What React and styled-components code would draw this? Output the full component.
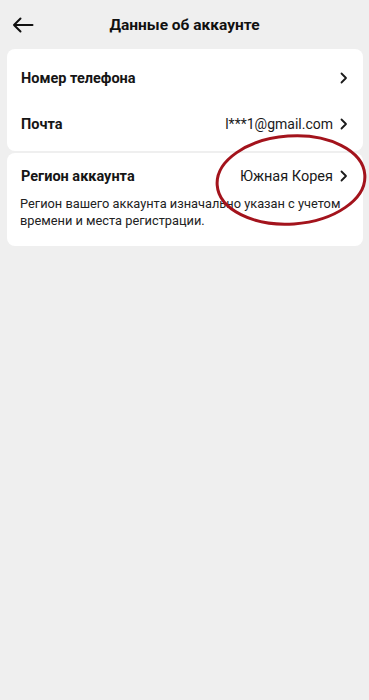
import React from 'react'
import styled, { createGlobalStyle } from 'styled-components'

const GlobalStyle = createGlobalStyle`
  html, body {
    margin: 0;
    padding: 0;
    background: #efefef;
  }
  body {
    font-family: Roboto, "Noto Sans", "Liberation Sans", sans-serif;
    color: #161616;
  }
`

const Page = styled.div`
  position: relative;
  width: 369px;
  min-height: 700px;
  background: #efefef;
`

const Header = styled.header`
  display: grid;
  grid-template-columns: 46px 1fr 46px;
  align-items: center;
  height: 49px;
`

const BackButton = styled.button`
  display: flex;
  align-items: center;
  justify-content: center;
  width: 46px;
  height: 49px;
  padding: 0;
  border: none;
  background: none;
  color: #111;
`

const Title = styled.h1`
  margin: 0;
  text-align: center;
  font-size: 15.5px;
  font-weight: 700;
  color: #111;
`

const Card = styled.section`
  margin: 0 6px ${(p) => p.$gap || 0}px 7px;
  padding: ${(p) => p.$pad};
  background: #fff;
  border-radius: 8px;
`

const Row = styled.div`
  display: flex;
  align-items: center;
  justify-content: space-between;
  height: ${(p) => p.$h || 46}px;
  padding: 0 15px 0 14px;
`

const Label = styled.span`
  font-size: 14.5px;
  font-weight: 700;
  color: #151515;
`

const Value = styled.span`
  display: flex;
  align-items: center;
  gap: 7px;
  font-size: ${(p) => p.$size || 14}px;
  color: #1a1a1a;
`

const Note = styled.p`
  margin: 0;
  padding: 1px 12px 17px 13px;
  font-size: 12.8px;
  line-height: 17px;
  color: #222;
`

const Circle = styled.svg`
  position: absolute;
  left: 210px;
  top: 132px;
  pointer-events: none;
`

const Chevron = () => (
  <svg width="8" height="12" viewBox="0 0 8 12">
    <path d="M1.5 1.5 L6 6 L1.5 10.5" fill="none" stroke="#1a1a1a" strokeWidth="1.8" strokeLinecap="round" strokeLinejoin="round" />
  </svg>
)

export default function App() {
  return (
    <Page>
      <GlobalStyle />
      <Header>
        <BackButton type="button" aria-label="Назад">
          <svg width="22" height="16" viewBox="0 0 22 16">
            <path d="M20.5 8 H2 M8.5 1.5 L2 8 L8.5 14.5" fill="none" stroke="#111" strokeWidth="2" strokeLinecap="round" strokeLinejoin="round" />
          </svg>
        </BackButton>
        <Title>Данные об аккаунте</Title>
        <span />
      </Header>

      <Card $pad="6px 0 4px" $gap={2}>
        <Row>
          <Label>Номер телефона</Label>
          <Value><Chevron /></Value>
        </Row>
        <Row>
          <Label>Почта</Label>
          <Value>l***1@gmail.com <Chevron /></Value>
        </Row>
      </Card>

      <Card $pad="5px 0 0">
        <Row $h={36}>
          <Label>Регион аккаунта</Label>
          <Value $size={14.5}>Южная Корея <Chevron /></Value>
        </Row>
        <Note>Регион вашего аккаунта изначально указан с учетом времени и места регистрации.</Note>
      </Card>

      <Circle width="160" height="100" viewBox="0 0 160 100">
        <ellipse cx="81" cy="48" rx="74" ry="44" transform="rotate(-4 81 48)" fill="none" stroke="#a3131c" strokeWidth="3" />
      </Circle>
    </Page>
  )
}
